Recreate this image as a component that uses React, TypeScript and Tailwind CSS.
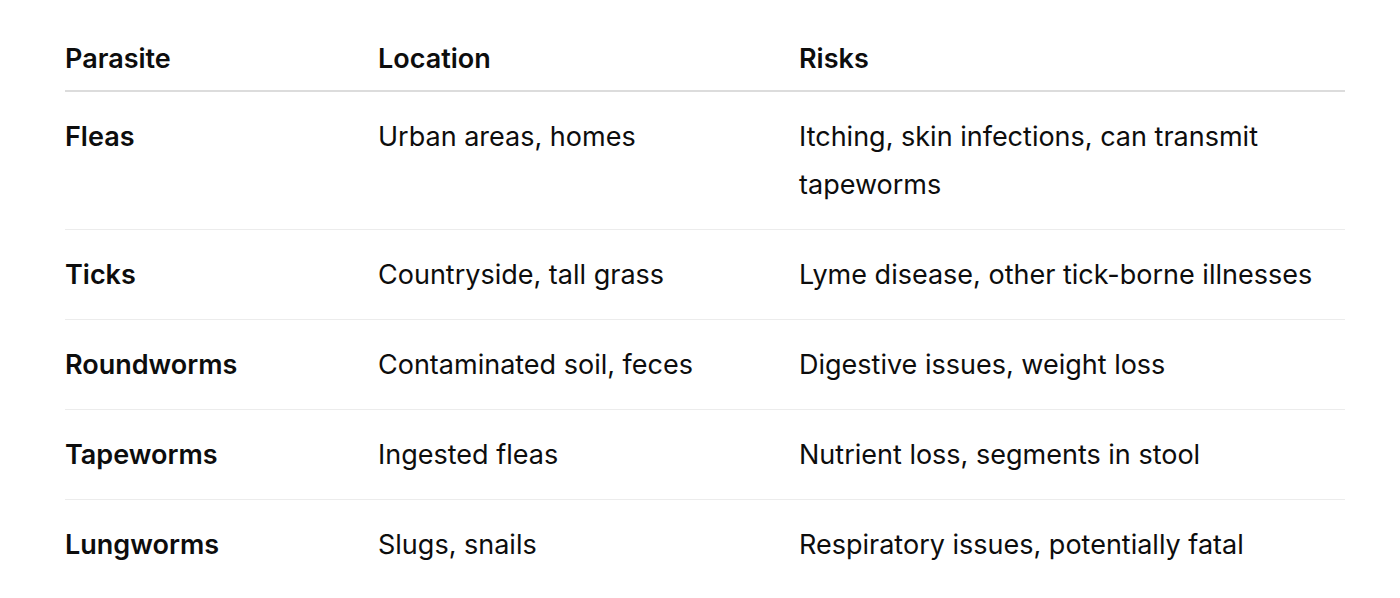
import React from "react";

const rows = [
  ["Fleas", "Urban areas, homes", "Itching, skin infections, can transmit tapeworms"],
  ["Ticks", "Countryside, tall grass", "Lyme disease, other tick-borne illnesses"],
  ["Roundworms", "Contaminated soil, feces", "Digestive issues, weight loss"],
  ["Tapeworms", "Ingested fleas", "Nutrient loss, segments in stool"],
  ["Lungworms", "Slugs, snails", "Respiratory issues, potentially fatal"],
];

export default function App() {
  return (
    <div
      className="w-[1400px] h-[598px] bg-white text-[#0d0d0d] pt-[35px] pl-[65px] pr-[55px] overflow-hidden"
      style={{ fontFamily: "Inter, 'Noto Sans', sans-serif" }}
    >
      <div className="grid grid-cols-[313px_421px_1fr] text-[27px] leading-[48px] font-semibold border-b-2 border-[#dcdcdc] pb-[7px]">
        <div>Parasite</div>
        <div>Location</div>
        <div>Risks</div>
      </div>
      {rows.map((r, i) => (
        <div
          key={i}
          className={
            "grid grid-cols-[313px_421px_1fr] text-[27px] leading-[48px] pt-[21px] pb-[20px] " +
            (i < rows.length - 1 ? "border-b border-[#ececec]" : "")
          }
        >
          <div className="font-semibold">{r[0]}</div>
          <div>{r[1]}</div>
          <div>{r[2]}</div>
        </div>
      ))}
    </div>
  );
}
